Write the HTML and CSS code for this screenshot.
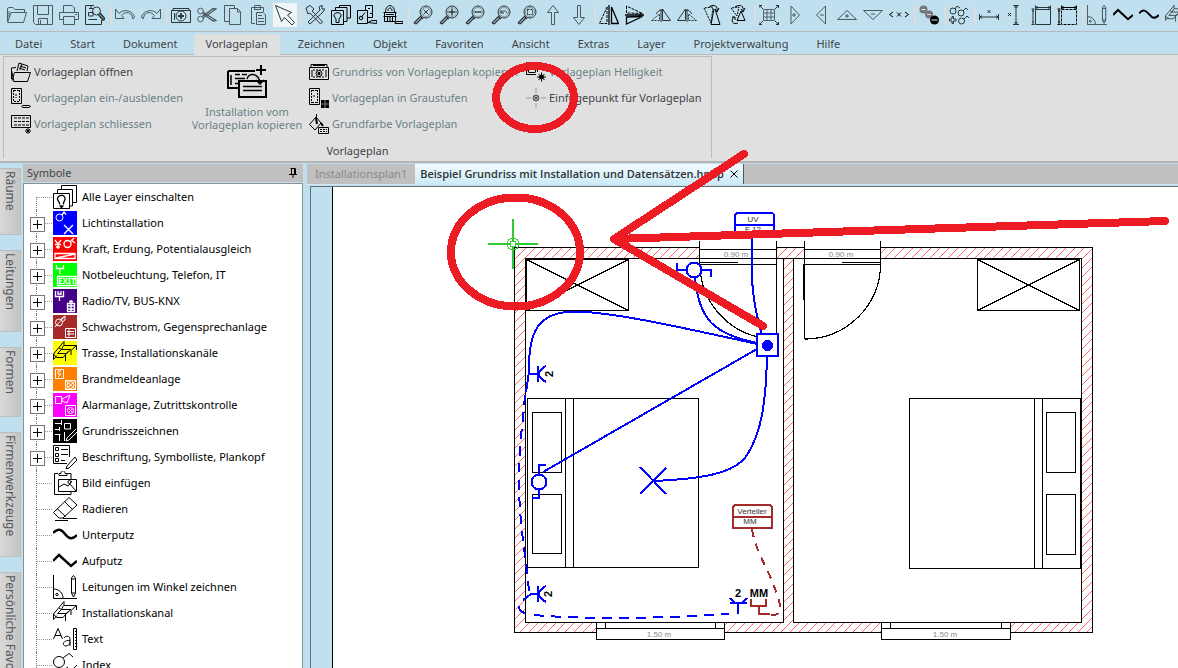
FILE: index.html
```
<!DOCTYPE html>
<html lang="de">
<head>
<meta charset="utf-8">
<title>Beispiel Grundriss mit Installation und Datensätzen.hmip</title>
<link rel="stylesheet" href="styles.css">
</head>
<body>
<svg class="defs" aria-hidden="true">
  <symbol id="lens" viewBox="0 0 20 20"><circle cx="13" cy="7" r="6"/><circle cx="13" cy="7" r="4.500" stroke="#8a969c"/><path d="M8 11L1 18M9.500 12.500L3 19M1 18l2 1M7 11l3 3" stroke-width="1.300"/></symbol>
  <symbol id="wave" viewBox="0 0 24 24"><path d="M0 10C5 5 8 6 12 11C16 16 19 17 24 12" stroke-width="2.400"/></symbol>
  <symbol id="zig" viewBox="0 0 24 24"><path d="M0 12L6 6L18 17L24 12" stroke-width="2.400"/></symbol>
  <symbol id="tray" viewBox="0 0 24 24"><path d="M11 .5L.5 13V18.500L4 14.500M4.500 12.500H13M11 .5V4.500H23.500V9M23 5L18 9.500V14M8.500 8.500H18L12.500 13.500V20M.5 13L3.500 16.500H10L15.500 10M6 7L8.500 8.500M10.500 4.500L8.500 8.500L4.500 12.500"/></symbol>
  <symbol id="angle" viewBox="0 0 24 24"><path d="M.5 0V23.500H24M.5 14C6 14 10 18 10 23M18.500 3V18L20.500 22L22.500 18V3L20.500 .5ZM18.500 4H22.500M18.500 18H22.500"/><circle cx="4" cy="19.500" r="1.200"/></symbol>
</svg>

<div class="app">
  <div class="toolbar" role="toolbar" aria-label="Werkzeuge">
    <button aria-label="Öffnen"><svg viewBox="0 0 20 20"><path d="M.5 16V3.500L2 2.500H6L8 4.500H17.500V7M.5 17.500L4 7.500H19.500L16.500 17.500ZM2 12V6"/></svg></button>
    <button aria-label="Speichern"><svg viewBox="0 0 20 20"><path d="M.5 .5H19.500V19.500H2.500L.5 17.500ZM4.500 .5V9.500H15.500V.5M5.500 19V13.500H14.500V19M7.500 15V19"/></svg></button>
    <button aria-label="Drucken"><svg viewBox="0 0 20 20"><path d="M4.500 7V.5H13L15.500 3V7M4 14.500H.5V7.500H19.500V14.500H16M4.500 11.500H15.500V19.500H4.500ZM16 9.500H18"/></svg></button>
    <button aria-label="Vorschau"><svg class="dark" viewBox="0 0 20 20"><path d="M9 .5H.5V19.500H16.500V15M4 3.500H8M3.500 7.500H8V11H3.500ZM3.500 14.500H12M6 1v3"/><circle cx="11.500" cy="6" r="4"/><path d="M13 9L18 15L20 14L15 8" stroke-width="1.600"/></svg></button>
    <i></i>
    <button aria-label="Rückgängig"><svg viewBox="0 0 20 20"><path d="M.5 4V13.500H9L6.500 10.500C10 6.500 14 7 16.500 10L18 14L19.500 12C18 6 9 3 4 8.500Z"/></svg></button>
    <button aria-label="Wiederholen"><svg viewBox="0 0 20 20"><path d="M19.500 4V13.500H11L13.500 10.500C10 6.500 6 7 3.500 10L2 14L.5 12C2 6 11 3 16 8.500Z"/></svg></button>
    <i></i>
    <button aria-label="Foto"><svg class="dark" viewBox="0 0 20 20"><path d="M.5 5.500H19.500V17.500H.5ZM2 5V3.500H18V5M3.500 8v7"/><circle cx="10" cy="11" r="5"/><path d="M10 8V14M7 11H13" stroke-width="1.800"/></svg></button>
    <button aria-label="Ausschneiden"><svg viewBox="0 0 20 20"><circle cx="3.500" cy="6" r="2.800"/><circle cx="3.500" cy="14" r="2.800"/><path d="M6 7L19 15.500L16 16L5.500 8.500M6 13L19 4L16 3.500L5.500 11.500" stroke-width="1.300"/></svg></button>
    <button aria-label="Kopieren"><svg viewBox="0 0 20 20"><path d="M6 16.500H1.500V.5H11.500V3M6.500 3.500H14.500L17.500 6.500V19.500H6.500ZM14.500 4V7H17"/></svg></button>
    <button aria-label="Einfügen"><svg viewBox="0 0 20 20"><path d="M6 18.500H2.500V2.500H14.500V7M5.500 1V4.500H11.500V.5H5.500M7.500 7.500H14L16.500 10V19.500H7.500ZM9 10.500H13M9 13.500H15M9 16.500H15"/></svg></button>
    <button class="on" aria-label="Auswahl" aria-pressed="true"><svg class="dark" viewBox="0 0 20 20"><path d="M.5 .5L6.500 16.500L9.500 12.500L17 20L19.500 17.500L12.500 10L16.500 7.500Z"/></svg></button>
    <i></i>
    <button aria-label="Optionen"><svg class="dark" viewBox="0 0 20 20"><path d="M1 3L5 .5L9 4L7 6L17.500 17L15.500 19L5 8L3 9ZM3 17L15 5L14 2L17 0V4H20L18 7L5 19Z"/></svg></button>
    <button aria-label="Layer"><svg class="black" viewBox="0 0 20 20"><path d="M.5 5.500H12.500V19.500H.5ZM4.500 5V2.500H16V16.500H13M8.500 2V.5H19.500V13H16M5 17.500H8V14L10 11C10.500 6.500 2.500 6.500 3 11L5 14Z"/></svg></button>
    <button aria-label="Symbole"><svg class="black" viewBox="0 0 20 20"><path d="M.5 5.500H10.500V18.500H.5ZM8.500 5V.5H15.500V12.500H11M11 3.500h2M13 8.500h2M4 12.500L8 7.500M15 15.500L11 17.500L19.500 18.500L20 15.500Z"/><circle cx="4" cy="13" r="1.800"/></svg></button>
    <button aria-label="Sperren"><svg class="black" viewBox="0 0 20 20"><path d="M2.500 7C2.500 -1.500 11.500 -1.500 11.500 7M5 6C5 2 9 2 9 6M.5 7.500H13.500M.5 11.500H13.500M1.500 7.500V16.500H12.500V7.500M4.500 12v4M7 12v4M9.500 12v4M3 9.500H11"/><path d="M12 17.500L14 16.500H20V18.500H12Z"/></svg></button>
    <i></i>
    <button aria-label="Alles zeigen"><svg class="dark" viewBox="0 0 20 20"><use href="#lens"/><path d="M10.500 4.500L15.500 9.500M15.500 4.500L10.500 9.500"/></svg></button>
    <button aria-label="Vergrössern"><svg class="dark" viewBox="0 0 20 20"><use href="#lens"/><path d="M13 3.500V10.500M9.500 7H16.500" stroke-width="1.400"/></svg></button>
    <button aria-label="Verkleinern"><svg class="dark" viewBox="0 0 20 20"><use href="#lens"/><path d="M9.500 7H16.500" stroke-width="1.400"/></svg></button>
    <button aria-label="Zoom zurück"><svg class="dark" viewBox="0 0 20 20"><use href="#lens"/><path d="M10 5V8H13M10 8C12 5 15 5 16 8.500"/></svg></button>
    <button aria-label="Zoom Fenster"><svg class="dark" viewBox="0 0 20 20"><use href="#lens"/><path d="M10.500 4.500H15.500V9.500H10.500Z" stroke-dasharray="2 1"/></svg></button>
    <button aria-label="Hoch"><svg viewBox="0 0 20 20"><path d="M8.500 19.500V7.500H4.500L10 .5L15.500 7.500H11.500V19.500Z"/></svg></button>
    <button aria-label="Runter"><svg viewBox="0 0 20 20"><path d="M8.500 .5V12.500H4.500L10 19.500L15.500 12.500H11.500V.5Z"/></svg></button>
    <i></i>
    <button aria-label="Horizontal spiegeln"><svg class="black" viewBox="0 0 20 20"><path d="M8 2V18.500H.5Z" stroke-dasharray="3 1"/><path d="M12.500 2V18.500H19.500ZM10 0V20" stroke-width="1.300"/></svg></button>
    <button aria-label="Vertikal spiegeln"><svg class="black" viewBox="0 0 20 20"><path d="M1.500 1V8L17.500 8.500Z" stroke-dasharray="3 1"/><path d="M1.500 19V12L17.500 11.500ZM0 10H19" stroke-width="1.300"/></svg></button>
    <button aria-label="Links kopieren"><svg class="dark" viewBox="0 0 20 20"><path d="M.5 15.500H8.500V9Z" stroke-dasharray="2 1"/><path d="M11.500 4V15.500H19.500ZM10 4V17M5 9Q8 4 11 5"/></svg></button>
    <button aria-label="Rechts kopieren"><svg class="dark" viewBox="0 0 20 20"><path d="M19.500 15.500H11.500V9Z" stroke-dasharray="2 1"/><path d="M8.500 4V15.500H.5ZM10 4V17M9 5Q12 4 15 9"/></svg></button>
    <button aria-label="Drehen links"><svg class="black" viewBox="0 0 20 20"><path d="M1 3L8 18L10 2Z" stroke-dasharray="2 1"/><path d="M11 4L8 19.500H17L12 4M6 2C12-2 15 2 14 6M12 4L14 7L16 3"/></svg></button>
    <button aria-label="Drehen rechts"><svg class="black" viewBox="0 0 20 20"><path d="M2 3L8 11L10 2Z" stroke-dasharray="2 1"/><path d="M12 6L8 15.500H16L12 6M6 2C12-2 15 2 14 6M12 4L14 7L16 3M5 12C1 16 4 20 9 18M3 12H6V15"/></svg></button>
    <i></i>
    <button aria-label="Raster"><svg class="dark" viewBox="0 0 20 20"><path d="M0 0L4 4M20 0L16 4M0 20L4 16M20 20L16 16M0 3V.5H3M17 .5H19.500V3M0 17V19.500H3M17 19.500H19.500V17" /><path stroke="#55636a" d="M4.500 4.500H15.500V15.500H4.500ZM4.500 8H15.500M4.500 12H15.500M8 5V15M12 5V15"/></svg></button>
    <button aria-label="Breiter"><svg viewBox="0 0 20 20"><path d="M6 1L14.500 10L6 19ZM7 10H11M9 8V12"/></svg></button>
    <button aria-label="Schmaler"><svg viewBox="0 0 20 20"><path d="M14.500 1L5.500 10L14.500 19ZM9 10H13"/></svg></button>
    <button aria-label="Höher"><svg viewBox="0 0 20 20"><path d="M.5 14.500L10 5.500L19.500 14.500ZM8 11H12M10 9V13"/></svg></button>
    <button aria-label="Niedriger"><svg viewBox="0 0 20 20"><path d="M.5 5.500L10 14.500L19.500 5.500ZM8 9H12"/></svg></button>
    <button aria-label="Zurücksetzen"><svg class="black" viewBox="0 0 20 20"><path d="M4 7L.5 9.500L4 12M16 7L19.500 9.500L16 12M8 7.500L12 11.500M12 7.500L8 11.500"/></svg></button>
    <i></i>
    <button aria-label="Reihe"><svg viewBox="0 0 20 20" stroke="none"><g stroke="none"><circle cx="4.500" cy="4.500" r="4" fill="#777"/><circle cx="10" cy="9.500" r="4" fill="#777"/><circle cx="15.500" cy="15" r="4.500" fill="#000"/></g><path d="M2.500 4.500H6.500M8 9.500H12M12.500 15H18.500" stroke="#dde8ee"/></svg></button>
    <i></i>
    <button aria-label="Symbole tauschen"><svg class="dark" viewBox="0 0 20 20"><circle cx="4" cy="6" r="3"/><circle cx="12" cy="8" r="3"/><circle cx="12.500" cy="16" r="3"/><path d="M6 4L8 1L11 3M14 6L17 3L19 5M15 14L18 11L20 13M4.500 11.500V14H7V16H4.500V18.500H3V16H.5V14H3V11.500Z"/></svg></button>
    <i></i>
    <button aria-label="Mass horizontal"><svg class="dark" viewBox="0 0 20 20"><path d="M.5 9V15M19.500 9V15M1 12H19M3 10.500L1 12L3 13.500M17 10.500L19 12L17 13.500M8.500 5L11.500 8M11.500 5L8.500 8"/></svg></button>
    <button aria-label="Mass vertikal"><svg class="dark" viewBox="0 0 20 20"><path d="M8 .5H14M8 19.500H14M11 1V19M9.500 3L11 1L12.500 3M9.500 17L11 19L12.500 17M3 8L6 11M6 8L3 11"/></svg></button>
    <button aria-label="Fläche"><svg class="dark" viewBox="0 0 20 20"><path d="M4.500 4.500H19.500V19.500H4.500ZM4 2.500H20M4.500 .5V4M19.500 .5V4M2 4V19M.5 4H3.500M.5 19.500H3.500M1 6h2M1 17h2M6 1v3M18 1v3"/></svg></button>
    <button aria-label="Auswahlfläche"><svg class="black" viewBox="0 0 20 20"><path d="M4.500 4.500H19.500V19.500H4.500Z" stroke-dasharray="3 1"/><path d="M4 2.500H20M4.500 .5V4M19.500 .5V4M2 4V19M.5 4H3.500M.5 19.500H3.500M1 6h2M1 17h2M6 1v3M18 1v3"/></svg></button>
    <i></i>
    <button aria-label="Winkel"><svg class="dark" viewBox="0 0 24 24"><use href="#angle"/></svg></button>
    <button aria-label="Aufputz"><svg class="black" viewBox="0 0 24 24"><use href="#zig"/></svg></button>
    <button aria-label="Unterputz"><svg class="black" viewBox="0 0 24 24"><use href="#wave"/></svg></button>
    <button aria-label="Trasse"><svg class="dark" viewBox="0 0 24 24"><use href="#tray"/></svg></button>
  </div>

  <nav class="menu">
    <button>Datei</button><button>Start</button><button>Dokument</button><button class="active">Vorlageplan</button><button>Zeichnen</button><button>Objekt</button><button>Favoriten</button><button>Ansicht</button><button>Extras</button><button>Layer</button><button>Projektverwaltung</button><button>Hilfe</button>
  </nav>

  <section class="ribbon">
    <div class="group">
      <div class="commands">
        <div class="stack">
          <button><svg viewBox="0 0 20 20"><path d="M3 19.500L.5 8.500V6L5 5.500M.5 8.500V17M1 18.500L3.500 10.500H19.500L16.500 19.500H2.500M6 9L8 1L17 4L16 9M9 4L15 6M8 6L14 8M11 2L9 8"/></svg>Vorlageplan öffnen</button>
          <button disabled><svg viewBox="0 0 20 20"><path d="M.5 .5H10.500V15.500H.5ZM11.500 17.500L18 17.500L19.500 18.500L18 19.500H12L10.500 18.500Z"/><path d="M2.500 2V14M8.500 2V14M3 2.500H8M3 13.500H8M5 6v4" stroke-dasharray="2 1"/></svg>Vorlageplan ein-/ausblenden</button>
          <button disabled><svg viewBox="0 0 20 20"><path d="M.5 1.500H19.500V13.500H.5ZM15 15L19 19M19 15L15 19M14 17H20M17 14V20"/><path d="M3 4H18M3 7.500H18M3 11H18" stroke-dasharray="3 1"/></svg>Vorlageplan schliessen</button>
        </div>
        <button class="big" disabled><svg viewBox="0 0 40 34"><path d="M1 6H28M1 6V23H12M12 16H39V32H12ZM34 0V10M29 5H39" stroke-width="2"/><path d="M16 21.500H35M16 25.500H35M4 10V20M8 9.500H13M15 9.500H20M8 13.500H18M8 18.500H11M20 14C22 7 32 8 33 18M29 15L33 19L37 15" stroke-width="1.500"/></svg><span>Installation vom<br>Vorlageplan kopieren</span></button>
        <div class="stack">
          <button disabled><svg viewBox="0 0 20 20"><path d="M.5 5.500H19.500V17.500H.5ZM2 5V2.500H18V5M4 3.500H16M3 8V15M17 8V15"/><path d="M4 8H16M4 15H16" stroke-dasharray="2 1"/><circle cx="10" cy="11.500" r="3"/><path d="M10 10V13M8.500 11.500H11.500" stroke-width="2"/></svg>Grundriss von Vorlageplan kopieren</button>
          <button disabled><svg viewBox="0 0 20 20"><path d="M.5 .5H10.500V16.500H.5Z"/><path d="M2.500 2V15M8.500 2V15M3 2.500H8M3 14.500H8M5 7v3" stroke-dasharray="2 1"/><path d="M12 12H15.700V15.700H12ZM16.300 12H20V15.700H16.300ZM12 16.300H15.700V20H12ZM16.300 16.300H20V20H16.300Z" fill="#000" stroke="none"/></svg>Vorlageplan in Graustufen</button>
          <button disabled><svg viewBox="0 0 20 20"><path d="M7.500 0V9M7 3L.5 10.500L6 16L12 9Z" /><path d="M7 4L8 10M12 9L14 12" stroke-width="2"/><path d="M9.500 13.500H19.500V19.500H9.500Z"/><path d="M11 15.500H18M11 17.500H18" stroke-dasharray="2 1"/></svg>Grundfarbe Vorlageplan</button>
        </div>
        <div class="stack">
          <button disabled><svg viewBox="0 0 20 20"><path d="M11.500 10V.5H.5V12.500H10M2.500 3H9.500M2.500 10.500H9.500M2.500 3V10M9.500 3V10M15.500 10.500V19.500M11 15H20M12.500 12L18.500 18M18.500 12L12.500 18"/><circle cx="15.500" cy="15" r="2" fill="#000"/></svg>Vorlageplan Helligkeit</button>
          <button><svg viewBox="0 0 20 20"><path d="M10 0V5M10 15V20M0 10H5M15 10H20" stroke="#999"/><circle cx="10" cy="10" r="3" fill="#aaa" stroke="#555"/><path d="M8.500 8.500L11.500 11.500M11.500 8.500L8.500 11.500" stroke="#555"/></svg>Einfügepunkt für Vorlageplan</button>
        </div>
      </div>
      <div class="caption">Vorlageplan</div>
    </div>
  </section>

  <main class="work">
    <div class="sidetabs">
      <button class="t1">Räume</button><button class="t2">Leitungen</button><button class="t3">Formen</button><button class="t4">Firmenwerkzeuge</button><button class="t5">Persönliche Favoriten</button>
    </div>

    <aside class="panel">
      <header><h2>Symbole</h2><button aria-label="Anheften"><svg viewBox="0 0 8 10"><path d="M1.500 .5H6.500V6M0 6.500H8M2.500 1V6M5.500 1V6M4 7V10"/></svg></button></header>
      <ul class="tree">
        <li><svg viewBox="0 0 24 24"><path d="M8.500 4V.5H23.500V17.500H20M4.500 8V4.500H19.500V21H16M.5 8.500H16.500V23.500H.5Z"/><path d="M6.500 19.500V18L4.500 14.500C4 9 13 9 12 14.500L10.500 18V19.500M6.500 21H10.500M7.500 22.500H9.500" stroke-width="1.300"/></svg>Alle Layer einschalten</li>
        <li class="sub"><svg class="white" viewBox="0 0 24 24"><path fill="#00f" stroke="none" d="M0 0H24V24H0Z"/><circle cx="6.500" cy="6.500" r="3.500"/><path d="M9 4L11 1L13 3.500M11 14L20 23M20 14L11 23" stroke-width="1.400"/></svg>Lichtinstallation</li>
        <li class="sub"><svg class="white" viewBox="0 0 24 24"><path fill="#f00" stroke="none" d="M0 0H24V24H0Z"/><circle cx="14.500" cy="7" r="3.500" stroke-width="1.400"/><path d="M17 5L21 1M18 3L22 6M2 3L5 7L8 3M2 7.500H8M3 10H7M5 7V12M2 16.500H22V21.500H2ZM3 21L22 17" stroke-width="1.300"/></svg>Kraft, Erdung, Potentialausgleich</li>
        <li class="sub"><svg class="white" viewBox="0 0 24 24"><path fill="#0f0" stroke="none" d="M0 0H24V24H0Z"/><path d="M3.500 2V5.500H10.500V2M7 6V11M4.500 13.500H23V22.500H4.500Z" stroke-width="1.300"/><text x="5" y="21">EXIT</text></svg>Notbeleuchtung, Telefon, IT</li>
        <li class="sub"><svg class="white" viewBox="0 0 24 24"><path fill="#408" stroke="none" d="M0 0H24V24H0Z"/><path d="M2.500 2V7.500H10.500V2M5 2V5H8V2M6.500 8V12M14.500 14.500H21.500V22.500H14.500ZM18 11V22M14.500 17H21.500M14.500 20H21.500M16 12.500H20" stroke-width="1.300"/></svg>Radio/TV, BUS-KNX</li>
        <li class="sub"><svg class="white" viewBox="0 0 24 24"><path fill="#a52a2a" stroke="none" d="M0 0H24V24H0Z"/><circle cx="6" cy="7.500" r="3.500"/><path d="M2 12L12 1M8 4L12 1V5L9 7M12.500 13.500H22.500V22.500H12.500ZM14 16.500H21M14 19H21M16 14.500V21.500"/></svg>Schwachstrom, Gegensprechanlage</li>
        <li class="sub"><svg viewBox="0 0 24 24"><path fill="#ff0" stroke="none" d="M0 0H24V24H0Z"/><use href="#tray"/></svg>Trasse, Installationskanäle</li>
        <li class="sub"><svg class="white" viewBox="0 0 24 24"><path fill="#ff8000" stroke="none" d="M0 0H24V24H0Z"/><path d="M2.500 2.500H10.500V11.500H2.500ZM8 4H5V7H8L5 10M12.500 13.500H22.500V22.500H12.500ZM13 14L22 22M22 14L13 22"/><circle cx="17.500" cy="18" r="3.500"/></svg>Brandmeldeanlage</li>
        <li class="sub"><svg class="white" viewBox="0 0 24 24"><path fill="#f0f" stroke="none" d="M0 0H24V24H0Z"/><path d="M2.500 3.500H8.500V10.500H2.500ZM9 6L17 2L14 10L9 8ZM12.500 12.500H22.500V22.500H12.500Z"/><circle cx="17.500" cy="17.500" r="3"/><path d="M16 16L19 19M19 16L16 19"/></svg>Alarmanlage, Zutrittskontrolle</li>
        <li class="sub"><svg class="white" viewBox="0 0 24 24"><path fill="#000" stroke="none" d="M0 0H24V24H0Z"/><path d="M2 4.500H8.500V1M8.500 4.500V6M11.500 4.500H17.500V10H11.500ZM6.500 8V12M2 10.500H6.500M2 15.500H7.500M6.500 15V22M11.500 13V22M23 10L14 19L13 22L16 21L24 13"/></svg>Grundrisszeichnen</li>
        <li class="sub"><svg viewBox="0 0 24 24"><path d="M14 18.500H.5V.5H16.500V12M2.500 2.500H5.500V5.500H2.500ZM2.500 8.500H5.500V11.500H2.500ZM2.500 13.500H5.500V16.500H2.500ZM8 4.500H15M8 9.500H15M8 15.500H12M22 12L14 21L13 24L16 23L24 15Z"/></svg>Beschriftung, Symbolliste, Plankopf</li>
        <li><svg viewBox="0 0 24 24"><path d="M5 2.500H1.500V23.500H18V21M14 2.500H18V8M6 4.500V2.500H8C8-1 12-1 12 2.500H14V4.500ZM5.500 8.500H23.500V20.500H5.500ZM6 16L11 13L15 15L17 13L23 20M15 15L19 10"/><circle cx="16.500" cy="11" r="1.500"/></svg>Bild einfügen</li>
        <li><svg viewBox="0 0 24 24"><path d="M.5 15.500L16 .5L24 8L10 21H6ZM11.500 4.500L19.500 12.500M4 11.500L12.500 19.500M10 21.500H24M2 23.500H15"/></svg>Radieren</li>
        <li><svg viewBox="0 0 24 24"><use href="#wave"/></svg>Unterputz</li>
        <li><svg viewBox="0 0 24 24"><use href="#zig"/></svg>Aufputz</li>
        <li><svg viewBox="0 0 24 24"><use href="#angle"/></svg>Leitungen im Winkel zeichnen</li>
        <li><svg viewBox="0 0 24 24"><use href="#tray"/></svg>Installationskanal</li>
        <li><svg viewBox="0 0 24 24"><path d="M.5 12L5 1.500L9.500 12M2 8.500H8M11 11C13 8 17 9 17 12V19M17 13.500C9 13 9 19 13 19C15 19 17 17 17 15M20.500 1.500H23.500V22.500H20.500ZM22 4.500h2M22 7.500h2M22 10.500h2M22 13.500h2M22 16.500h2M22 19.500h2"/></svg>Text</li>
        <li><svg viewBox="0 0 24 24"><circle cx="6" cy="9" r="5.500"/><path d="M10 5L16 .5L20 4M12 16L15 14M24 12L15 21"/></svg>Index</li>
      </ul>
    </aside>

    <section class="document">
      <div class="doctabs">
        <button>Installationsplan1</button>
        <button class="current"><span>Beispiel Grundriss mit Installation und Datensätzen.hmip</span><svg viewBox="0 0 8 8"><path d="M.5 .5L7.500 7.500M7.500 .5L.5 7.500"/></svg></button>
      </div>
      <div class="sheet">
        <div class="ruler"></div>
        <div class="canvas">
          <svg class="plan" width="845" height="481" viewBox="333 187 845 481" role="img" aria-label="Grundriss">
            <defs><pattern id="hatch" width="9" height="9" patternUnits="userSpaceOnUse"><path d="M-1 10L10-1" stroke="#ff6b6b" stroke-width="1"/></pattern></defs>
            <path fill="url(#hatch)" fill-rule="evenodd" stroke="none" d="M514 247H1092V632H514ZM526 259V622H783V259ZM794 259V622H1081V259Z"/>
            <path fill="#fff" stroke="none" d="M700 247H776V260H700ZM805 247H880V260H805ZM597 622H724V633H597ZM882 622H1010V633H882Z"/>
            <g stroke="#000">
              <path d="M514.500 247.500H1092.500V632.500H514.500ZM525.500 258.500V622.500H783.500V258.500ZM793.500 258.500V622.500H1081.500V258.500ZM776.500 258.500H804"/>
              <path fill="#fff" d="M596.500 622.500H724.500V639.500H596.500ZM881.500 622.500H1010.500V639.500H881.500Z"/>
              <path d="M596.500 628.500H724.500M605.500 622V628M715.500 622V628M881.500 628.500H1010.500M890.500 622V628M1001.500 622V628"/>
              <path stroke="#fff" stroke-width="2" d="M700 247.500H776M805 247.500H880"/>
              <path d="M699.500 241V264M776.500 241V334M700 249.500H776M700 262.500H738M700 264.500H776M804.500 241V339M803.500 264V300M880.500 241V271M804 249.500H880M804 264.500H880M842 262.500H880"/>
              <path d="M700 264.500A76 75 0 0 0 776 339M880.500 264A76 75 0 0 1 804.500 339H808" stroke-width="1.200"/>
              <path d="M526.500 259.500H628.500V310.500H526.500ZM526.500 259.500L628.500 310.500M628.500 259.500L526.500 310.500M977.500 259.500H1079.500V310.500H977.500ZM977.500 259.500L1079.500 310.500M1079.500 259.500L977.500 310.500"/>
              <path d="M527.500 398.500H698.500V567.500H527.500ZM565.500 398V567M573.500 398V567M532.500 412.500H561.500V472.500H532.500ZM532.500 494.500H561.500V553.500H532.500ZM909.500 398.500H1080.500V568.500H909.500ZM1034.500 398V568M1042.500 398V568M1046.500 412.500H1075.500V472.500H1046.500ZM1046.500 494.500H1075.500V554.500H1046.500Z"/>
            </g>
            <g stroke="#00f" stroke-width="2">
              <path d="M735 224V216Q735 213 738 213H771Q774 213 774 216V236M735 225H774M752 237C751 265 750 295 762 335M735 224V236H774"/>
              <circle cx="694" cy="270" r="7.500"/><path d="M686 270H677V263M702 270H711V277M695 278C699 320 714 334 757 343M526 392L529 372C528 330 540 314 568 312C600 309 680 327 757 344M543 472L757 349"/>
              <path d="M767 356C766 400 762 432 747 455C735 474 700 479 653 481M640 467L666 494M666 468L640 494"/>
              <path fill="#fff" d="M757 334H778V356H757Z"/><circle cx="767.500" cy="345.500" r="4.500" fill="#00f"/>
              <circle cx="539" cy="482" r="7.500"/><path d="M539 474V465H546M539 490V498H532"/>
              <path d="M529 374H538M538 366V382M546 366Q532 374 546 382M523 600L531 594H538M538 586V602M546 586Q532 594 546 602M738 614V604M730 603H747M730 598Q738 609 747 598"/>
              <path stroke-dasharray="10 7" d="M525 395C523 425 519 440 519 480C519 525 526 555 529 592M519 606Q519 612 525 613M534 615C590 620 670 618 729 614"/>
            </g>
            <g stroke="#a52a2a" stroke-width="2"><path d="M735 505H770L772 507V528H733V507ZM733 517H772M751 599V606H766V599M759 606V614H770"/><path stroke-dasharray="8 7" d="M752 529C755 550 768 569 774 586C782 607 784 616 770 615"/></g>
            <g stroke="#32c832" stroke-width="2"><path d="M488 244H538M513 219V269"/><circle cx="513" cy="244" r="6" stroke-width="1"/><circle cx="513" cy="244" r="3" fill="#fff" stroke-width="1"/></g>
            <g class="tags" text-anchor="middle">
              <text x="753" y="222">UV</text><text x="753" y="232">F 12</text><text x="752" y="514">Verteiler</text><text x="750" y="524">MM</text>
              <g class="dim"><text x="736" y="257">0.90 m</text><text x="841" y="257">0.90 m</text><text x="659" y="637">1.50 m</text><text x="945" y="637">1.50 m</text></g>
              <g class="bold"><text transform="translate(553 374) rotate(-90)">2</text><text transform="translate(552 594) rotate(-90)">2</text><text x="738" y="597">2</text><text x="759" y="597">MM</text></g>
            </g>
          </svg>
        </div>
      </div>
    </section>
  </main>

  <svg class="markup" width="1178" height="668" viewBox="0 0 1178 668" aria-hidden="true">
    <ellipse cx="535" cy="97.500" rx="39" ry="31.500"/><ellipse cx="515.500" cy="252" rx="64.500" ry="54.500"/>
    <path d="M1165 221L614 239L744 154M614 239L763 326"/>
  </svg>
</div>
</body>
</html>
```
FILE: styles.css
```
* { box-sizing: border-box; }
body { margin: 0; font: 11px/14px "Noto Sans", "Open Sans", sans-serif; color: #404448; }
button { margin: 0; padding: 0; border: 0; background: none; font: inherit; color: inherit; }
svg { display: block; flex: none; fill: none; stroke: #000; }
.defs { position: absolute; width: 0; height: 0; }
.app { position: relative; display: flex; flex-direction: column; height: 100vh; overflow: hidden; background: #c0e0ef; }

.toolbar { display: flex; flex: none; height: 32px; padding: 2px 0 0 4px; border-bottom: 1px solid #b9b9bd; }
.toolbar button { display: grid; place-items: center; flex: none; width: 26px; height: 26px; }
.toolbar svg { width: 20px; height: 20px; stroke: #4c5960; }
.toolbar svg.dark { stroke: #2c3438; }
.toolbar svg.black { stroke: #000; }
.toolbar .on { border: 1px solid #c0e0ef; background: #f0f5f8; }
.toolbar i { flex: none; width: 4px; height: 20px; margin-top: 3px; border-right: 2px solid #dcdcdc; }

.menu { display: flex; flex: none; height: 23px; padding: 2px 0 0 1px; border-bottom: 1px solid #b9b9bd; }
.menu button { flex: none; height: 21px; padding: 0 14px 2px; }
.menu .active { margin: 0 4px 0 2px; padding: 0 12px 2px; border-radius: 4px 4px 0 0; background: #e0e0e0; }

.ribbon { flex: none; padding: 1px 3px 3px; border-bottom: 2px solid #b4b4b4; background: #e0e0e0; }
.group { width: 709px; padding: 2px 7px 0; border: 1px solid #bcbcbc; border-bottom: 0; }
.commands { display: grid; grid-template-columns: 177px 118px 217px 1fr; }
.stack { display: grid; grid-auto-rows: 26px; align-content: start; }
.stack:not(:first-child) { padding-left: 3px; }
.stack button { display: flex; align-items: center; gap: 3px; white-space: nowrap; }
.stack svg { width: 20px; height: 20px; }
.commands button:disabled { color: #6b8087; }
.big { display: flex; flex-direction: column; align-items: center; gap: 6px; padding-top: 6px; line-height: 13px; white-space: nowrap; }
.big svg { width: 40px; height: 34px; }
.caption { padding-top: 7px; text-align: center; }

.work { display: grid; grid-template-columns: 23px 280px 1fr; flex: 1; min-height: 0; }
.sidetabs { display: flex; flex-direction: column; gap: 15px; padding: 5px 2px 0 0; overflow: hidden; }
.sidetabs button { flex: none; padding: 2px 0; border: 1px solid #bdbdbd; border-left: 0; background: linear-gradient(90deg, #d8d8d8, #c4c4c4); writing-mode: vertical-rl; text-align: left; font-size: 12px; white-space: nowrap; color: #50565a; }
.sidetabs .t1 { height: 67px; }
.sidetabs .t2 { height: 82px; }
.sidetabs .t3 { height: 70px; }
.sidetabs .t4 { height: 125px; }
.sidetabs .t5 { height: 150px; }

.panel { display: flex; flex-direction: column; min-height: 0; padding-top: 1px; }
.panel header { display: flex; flex: none; align-items: center; justify-content: space-between; height: 18px; margin-bottom: 1px; padding: 0 6px 0 4px; background: #c0c0c0; }
.panel h2 { margin: 0; font-size: 11px; font-weight: 400; }
.panel header svg { width: 8px; height: 10px; }
.tree { flex: 1; min-height: 0; margin: 0; padding: 0; overflow: hidden; border: 1px solid #8a8f93; border-bottom: 0; background: #fff; color: #000; list-style: none; }
.tree li { position: relative; display: flex; align-items: center; gap: 5px; height: 26px; padding-left: 29px; }
.tree svg { width: 24px; height: 24px; }
.tree svg.white { stroke: #fff; }
.tree text { fill: #fff; stroke: none; font-size: 8px; font-weight: 700; }
.tree li::before { content: ""; position: absolute; left: 12px; top: 0; width: 15px; height: 26px; border-left: 1px dotted #777; background: linear-gradient(90deg, #999 50%, transparent 50%) 0 13px / 2px 1px repeat-x; }
.tree li:first-child::before { top: 13px; height: 13px; background-position: 0 0; }
.tree .sub::after { content: ""; position: absolute; left: 6px; top: 7px; width: 13px; height: 13px; border: 1px solid #777; background: linear-gradient(#000, #000) center / 9px 1px no-repeat, linear-gradient(#000, #000) center / 1px 9px no-repeat, #fff; }

.document { display: flex; flex-direction: column; min-width: 0; min-height: 0; padding: 1px 0 0 4px; }
.doctabs { display: flex; flex: none; height: 21px; border-bottom: 1px solid #d4e6f0; background: #c0c0c0; }
.doctabs button { flex: none; padding: 0 8px; color: #8a8a8a; }
.doctabs .current { display: flex; align-items: center; gap: 6px; padding: 0 5px; border-right: 1px solid #505860; background: linear-gradient(#f2fbff, #cbeaf8); color: #333; font: 600 11px/14px "Open Sans", "Noto Sans", sans-serif; }
.doctabs svg { width: 8px; height: 8px; }
.sheet { display: flex; flex: 1; min-height: 0; margin-top: 1px; margin-left: 3px; border: 1px solid #666f76; border-width: 1px 0 0 1px; }
.ruler { flex: none; width: 22px; border: 1px solid #000; border-width: 0 1px 0 0; }
.canvas { flex: 1; min-width: 0; overflow: hidden; background: #fff; }
.plan { shape-rendering: crispEdges; }
.tags { fill: #333; stroke: none; font: 8px "Liberation Sans", Arial, sans-serif; }
.dim { fill: #888; }
.bold { fill: #000; font-size: 11px; font-weight: 700; }

.markup { position: absolute; top: 0; left: 0; pointer-events: none; shape-rendering: crispEdges; stroke: #ed1c24; stroke-width: 8px; stroke-linecap: round; stroke-linejoin: round; }
```
